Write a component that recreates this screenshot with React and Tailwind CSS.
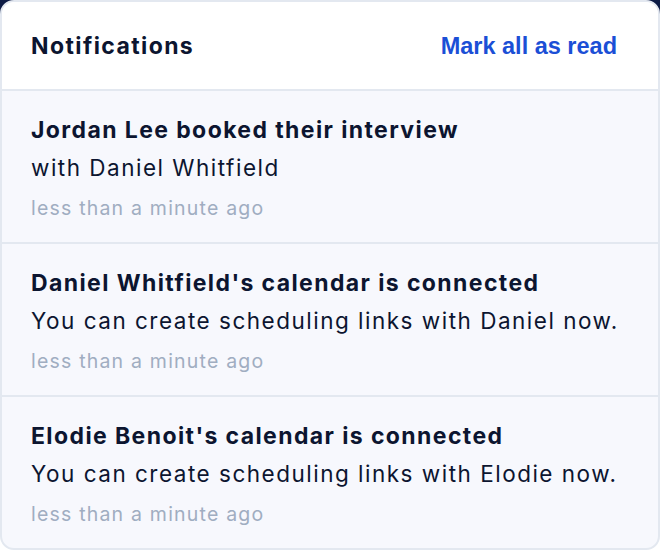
const notifications = [
  {
    title: 'Jordan Lee booked their interview',
    body: 'with Daniel Whitfield',
    time: 'less than a minute ago',
  },
  {
    title: "Daniel Whitfield's calendar is connected",
    body: 'You can create scheduling links with Daniel now.',
    time: 'less than a minute ago',
  },
  {
    title: "Elodie Benoit's calendar is connected",
    body: 'You can create scheduling links with Elodie now.',
    time: 'less than a minute ago',
  },
];

export default function App() {
  return (
    <div className="w-[660px] h-[550px] bg-[linear-gradient(to_bottom,#0d1b45_0px,#0d1b45_14px,#ffffff_14px)] font-['Inter',sans-serif]">
      <div className="h-full flex flex-col bg-[#f7f8fd] border-2 border-[#e3e8f0] rounded-[14px] overflow-hidden">
        <div className="h-[89px] shrink-0 flex items-center justify-between bg-white border-b-2 border-[#e3e8f0] pl-[29px] pr-[41px]">
          <h2 className="text-[23px] font-bold text-[#0c1530] tracking-[1.4px] pt-[2px]">Notifications</h2>
          <button className="text-[23.5px] font-bold text-[#1b4fd6] font-['Liberation_Sans',Arial,sans-serif] pt-[2px]">
            Mark all as read
          </button>
        </div>
        {notifications.map((n, idx) => (
          <div
            key={idx}
            className={`pl-[29px] pr-4 pt-[20px] pb-[15px] ${idx < notifications.length - 1 ? 'border-b-2 border-[#e3e8f0]' : ''}`}
          >
            <div className="text-[23px] leading-[38px] font-bold text-[#0c1530] tracking-[1.4px]">{n.title}</div>
            <div className="text-[22.5px] leading-[38px] text-[#0c1530] tracking-[1.5px]">{n.body}</div>
            <div className="text-[19.5px] leading-[38px] text-[#a0adc1] tracking-[1.2px] pt-[2px]">{n.time}</div>
          </div>
        ))}
      </div>
    </div>
  );
}
